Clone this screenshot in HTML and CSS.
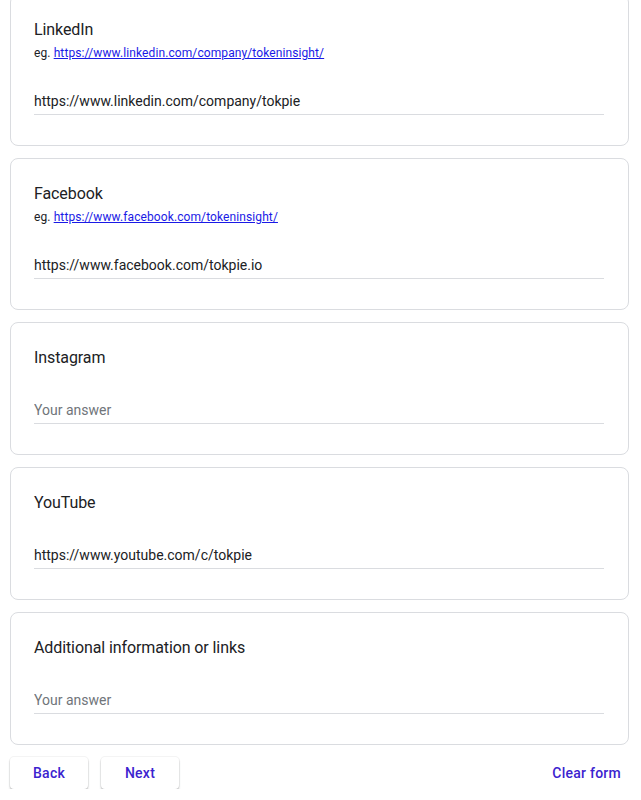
FILE: index.html
```html
<!DOCTYPE html>
<html lang="en">
<head>
<meta charset="utf-8">
<title>Form</title>
<link rel="stylesheet" href="styles.css">
</head>
<body>
<div class="form">
  <div class="card">
    <div class="title">LinkedIn</div>
    <div class="desc">eg. <a href="#">https://www.linkedin.com/company/tokeninsight/</a></div>
    <input class="answer desc-gap" type="text" value="https://www.linkedin.com/company/tokpie">
  </div>
  <div class="card">
    <div class="title">Facebook</div>
    <div class="desc">eg. <a href="#">https://www.facebook.com/tokeninsight/</a></div>
    <input class="answer desc-gap" type="text" value="https://www.facebook.com/tokpie.io">
  </div>
  <div class="card">
    <div class="title">Instagram</div>
    <input class="answer" type="text" placeholder="Your answer">
  </div>
  <div class="card">
    <div class="title">YouTube</div>
    <input class="answer" type="text" value="https://www.youtube.com/c/tokpie">
  </div>
  <div class="card">
    <div class="title">Additional information or links</div>
    <input class="answer" type="text" placeholder="Your answer">
  </div>
  <div class="actions">
    <div class="nav">
      <button class="btn raised">Back</button>
      <button class="btn raised">Next</button>
    </div>
    <button class="btn flat">Clear form</button>
  </div>
</div>
</body>
</html>
```

FILE: styles.css
```css
html, body {
  margin: 0;
  padding: 0;
  background: #ffffff;
}
body {
  font-family: Roboto, "Liberation Sans", Arial, sans-serif;
  color: #202124;
}
.form {
  width: 619px;
  margin: -6px 0 0 10px;
  display: flex;
  flex-direction: column;
  gap: 12px;
}
.card {
  box-sizing: border-box;
  background: #fff;
  border: 1px solid #dadce0;
  border-radius: 8px;
  padding: 23px 24px 30px 23px;
  display: flex;
  flex-direction: column;
  align-items: flex-start;
}
.title {
  font-size: 16px;
  line-height: 24px;
  letter-spacing: -0.1px;
  color: #202124;
}
.desc {
  margin-top: 2px;
  font-size: 12px;
  line-height: 18px;
  letter-spacing: 0.1px;
  color: #202124;
}
.desc a {
  color: #1a1ae6;
  text-decoration: underline;
}
.answer {
  box-sizing: content-box;
  width: 570px;
  height: 20px;
  margin: 29px 0 0 0;
  padding: 1px 0 3px 0;
  border: none;
  border-bottom: 1px solid #dadce0;
  outline: none;
  background: transparent;
  font-family: Roboto, "Liberation Sans", Arial, sans-serif;
  font-size: 14px;
  line-height: 20px;
  letter-spacing: 0;
  color: #202124;
}
.answer.desc-gap {
  margin-top: 28px;
}
.answer::placeholder {
  color: #70757a;
  opacity: 1;
}
.actions {
  display: flex;
  justify-content: space-between;
  align-items: flex-start;
}
.nav {
  display: flex;
  gap: 13px;
}
.btn {
  font-family: Roboto, "Liberation Sans", Arial, sans-serif;
  font-size: 14px;
  font-weight: 500;
  letter-spacing: 0.25px;
  color: #3b23cf;
  background: #fff;
  border: none;
  height: 32px;
  cursor: pointer;
}
.raised {
  width: 78px;
  padding: 0;
  border-radius: 4px;
  box-shadow: 0 0 0 1px rgba(60, 64, 67, 0.06), 0 2px 2px rgba(60, 64, 67, 0.3);
}
.flat {
  padding: 0 8px;
  box-shadow: none;
}
```
